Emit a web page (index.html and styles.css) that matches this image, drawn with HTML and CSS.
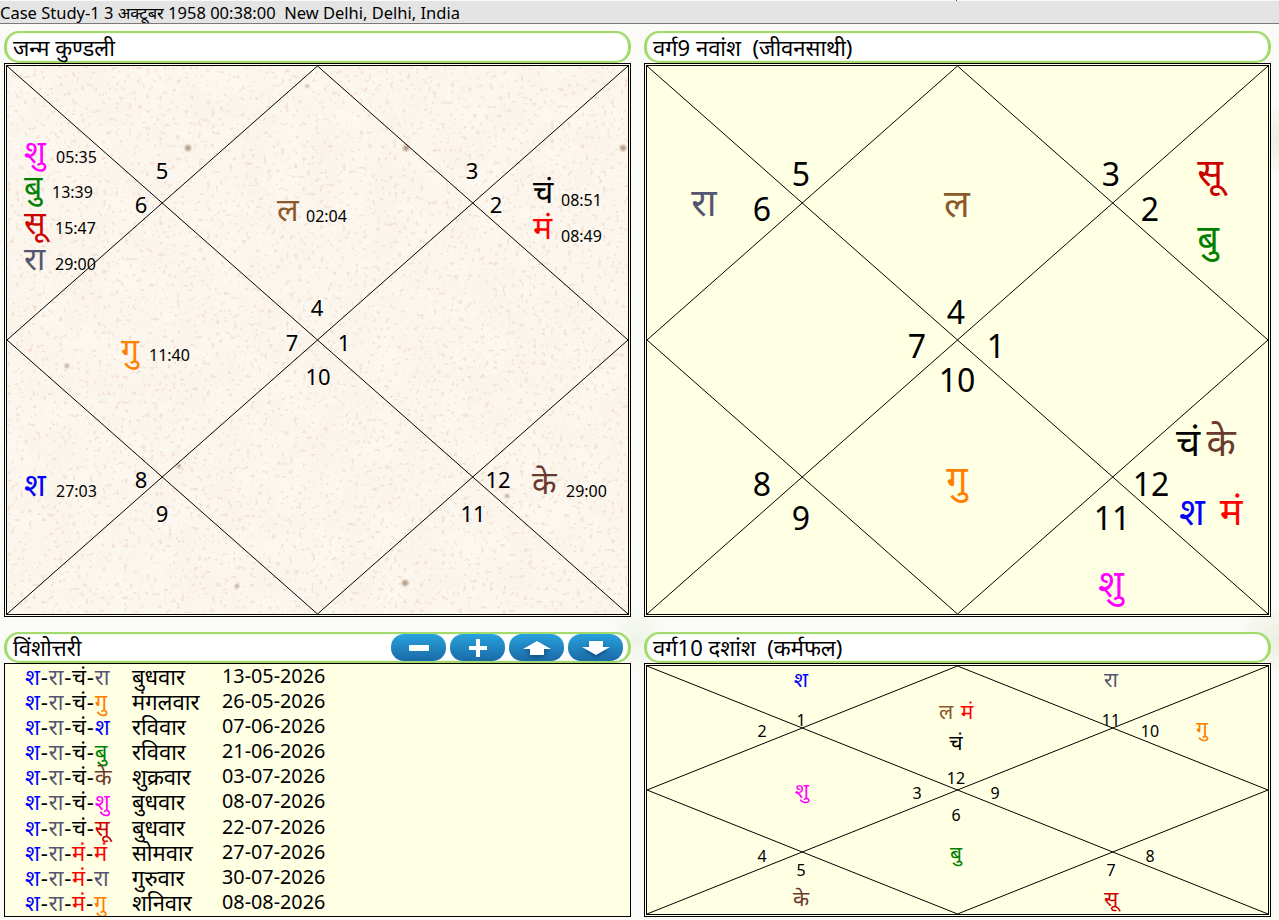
FILE: index.html
```html
<!DOCTYPE html>
<html lang="en">
<head>
    <meta charset="UTF-8">
    <title>Kundali</title>
    <link rel="stylesheet" href="styles.css">
</head>
<body>
    <div id="status-bar">Case Study-1 3 अक्टूबर 1958 00:38:00&nbsp; New Delhi, Delhi, India</div>

    <div id="layout">
        <section class="panel panel-top">
            <div class="pill"><span class="pill-title">जन्म कुण्डली</span></div>
            <div class="chart-box">
                <svg class="chart" width="621" height="548" viewBox="0 0 621 548">
                    <defs>
                        <filter id="paper" x="0" y="0" width="100%" height="100%">
                            <feTurbulence type="fractalNoise" baseFrequency="0.23" numOctaves="2" seed="11"/>
                            <feColorMatrix type="matrix" values="0 0 0 0 0.86  0 0 0 0 0.66  0 0 0 0 0.56  0 0 0 12 -7.6"/>
                        </filter>
                        <filter id="mottle" x="0" y="0" width="100%" height="100%">
                            <feTurbulence type="fractalNoise" baseFrequency="0.03" numOctaves="3" seed="4"/>
                            <feColorMatrix type="matrix" values="0 0 0 0 0.93  0 0 0 0 0.84  0 0 0 0 0.74  0 0 0 2 -0.7"/>
                        </filter>
                        <filter id="soft"><feGaussianBlur stdDeviation="0.9"/></filter>
                    </defs>
                    <rect class="paper-base" width="621" height="548"/>
                    <rect width="621" height="548" filter="url(#mottle)" opacity="0.3"/>
                    <rect width="621" height="548" filter="url(#paper)" opacity="0.55"/>
                    <g class="specks" filter="url(#soft)">
                        <circle cx="181" cy="82" r="3"/><circle cx="399" cy="82" r="3"/><circle cx="616" cy="82" r="3"/>
                        <circle cx="398" cy="517" r="3"/><circle cx="172" cy="400" r="2"/><circle cx="60" cy="300" r="2"/>
                        <circle cx="500" cy="430" r="2"/><circle cx="300" cy="20" r="1.5"/><circle cx="230" cy="520" r="2"/>
                    </g>
                    <path class="lines" d="M0 0L621 548M621 0L0 548M310.5 0L621 274L310.5 548L0 274Z"/>
                    <g class="num-md">
                        <text x="155" y="113">5</text><text x="134" y="147">6</text>
                        <text x="465" y="113">3</text><text x="489" y="147">2</text>
                        <text x="310" y="250">4</text><text x="285" y="285">7</text>
                        <text x="337" y="285">1</text><text x="311" y="319">10</text>
                        <text x="134" y="422">8</text><text x="155" y="456">9</text>
                        <text x="491" y="422">12</text><text x="466" y="456">11</text>
                    </g>
                    <g class="planet-md">
                        <text x="17" y="97" class="shu">शु</text><text x="49" y="97" class="deg">05:35</text>
                        <text x="17" y="132" class="bu">बु</text><text x="45" y="132" class="deg">13:39</text>
                        <text x="17" y="168" class="su">सू</text><text x="48" y="168" class="deg">15:47</text>
                        <text x="17" y="204" class="ra">रा</text><text x="48" y="204" class="deg">29:00</text>
                        <text x="270" y="155" class="la">ल</text><text x="299" y="156" class="deg">02:04</text>
                        <text x="526" y="137" class="ch">चं</text><text x="554" y="140" class="deg">08:51</text>
                        <text x="526" y="173" class="ma">मं</text><text x="554" y="176" class="deg">08:49</text>
                        <text x="114" y="295" class="gu">गु</text><text x="142" y="295" class="deg">11:40</text>
                        <text x="17" y="430" class="sha">श</text><text x="49" y="431" class="deg">27:03</text>
                        <text x="525" y="428" class="ke">के</text><text x="559" y="431" class="deg">29:00</text>
                    </g>
                </svg>
            </div>
        </section>

        <section class="panel panel-top">
            <div class="pill"><span class="pill-title">वर्ग9 नवांश&nbsp; (जीवनसाथी)</span></div>
            <div class="chart-box chart-cream">
                <svg class="chart" width="621" height="548" viewBox="0 0 621 548">
                    <path class="lines" d="M0 0L621 548M621 0L0 548M310.5 0L621 274L310.5 548L0 274Z"/>
                    <g class="num-lg">
                        <text x="154" y="120">5</text><text x="115" y="155">6</text>
                        <text x="464" y="120">3</text><text x="503" y="155">2</text>
                        <text x="309" y="258">4</text><text x="270" y="292">7</text>
                        <text x="349" y="292">1</text><text x="310" y="326">10</text>
                        <text x="115" y="430">8</text><text x="154" y="464">9</text>
                        <text x="504" y="430">12</text><text x="465" y="464">11</text>
                    </g>
                    <g class="planet-lg">
                        <text x="57" y="150" class="ra">रा</text>
                        <text x="310" y="151" class="la">ल</text>
                        <text x="563" y="120" class="su">सू</text>
                        <text x="561" y="186" class="bu">बु</text>
                        <text x="310" y="427" class="gu">गु</text>
                        <text x="541" y="390" class="ch">चं</text><text x="574" y="390" class="ke">के</text>
                        <text x="545" y="459" class="sha">श</text><text x="584" y="459" class="ma">मं</text>
                        <text x="464" y="531" class="shu">शु</text>
                    </g>
                </svg>
            </div>
        </section>

        <section class="panel panel-bottom">
            <div class="pill">
                <span class="pill-title">विंशोत्तरी</span>
                <div class="pill-buttons">
                    <button class="pill-btn" title="Zoom out"><svg width="20" height="8" viewBox="0 0 20 8"><rect x="0" y="1" width="20" height="6" rx="1"/></svg></button>
                    <button class="pill-btn" title="Zoom in"><svg width="18" height="18" viewBox="0 0 18 18"><path d="M7 0h4v7h7v4h-7v7H7v-7H0V7h7z"/></svg></button>
                    <button class="pill-btn pill-arrow" title="Up"><svg width="30" height="14" viewBox="0 0 30 14"><path d="M15 0L29 8H22V14H8V8H1Z"/></svg></button>
                    <button class="pill-btn pill-arrow" title="Down"><svg width="30" height="14" viewBox="0 0 30 14"><path d="M8 0H22V6H29L15 14L1 6H8Z"/></svg></button>
                </div>
            </div>
            <div class="dasha-box">
                <div class="dasha-row"><span class="dasha-lords"><b class="sha">श</b>-<b class="ra">रा</b>-<b class="ch">चं</b>-<b class="ra">रा</b></span><span class="dasha-day">बुधवार</span><span class="dasha-date">13-05-2026</span></div>
                <div class="dasha-row"><span class="dasha-lords"><b class="sha">श</b>-<b class="ra">रा</b>-<b class="ch">चं</b>-<b class="gu">गु</b></span><span class="dasha-day">मंगलवार</span><span class="dasha-date">26-05-2026</span></div>
                <div class="dasha-row"><span class="dasha-lords"><b class="sha">श</b>-<b class="ra">रा</b>-<b class="ch">चं</b>-<b class="sha">श</b></span><span class="dasha-day">रविवार</span><span class="dasha-date">07-06-2026</span></div>
                <div class="dasha-row"><span class="dasha-lords"><b class="sha">श</b>-<b class="ra">रा</b>-<b class="ch">चं</b>-<b class="bu">बु</b></span><span class="dasha-day">रविवार</span><span class="dasha-date">21-06-2026</span></div>
                <div class="dasha-row"><span class="dasha-lords"><b class="sha">श</b>-<b class="ra">रा</b>-<b class="ch">चं</b>-<b class="ke">के</b></span><span class="dasha-day">शुक्रवार</span><span class="dasha-date">03-07-2026</span></div>
                <div class="dasha-row"><span class="dasha-lords"><b class="sha">श</b>-<b class="ra">रा</b>-<b class="ch">चं</b>-<b class="shu">शु</b></span><span class="dasha-day">बुधवार</span><span class="dasha-date">08-07-2026</span></div>
                <div class="dasha-row"><span class="dasha-lords"><b class="sha">श</b>-<b class="ra">रा</b>-<b class="ch">चं</b>-<b class="su">सू</b></span><span class="dasha-day">बुधवार</span><span class="dasha-date">22-07-2026</span></div>
                <div class="dasha-row"><span class="dasha-lords"><b class="sha">श</b>-<b class="ra">रा</b>-<b class="ma">मं</b>-<b class="ma">मं</b></span><span class="dasha-day">सोमवार</span><span class="dasha-date">27-07-2026</span></div>
                <div class="dasha-row"><span class="dasha-lords"><b class="sha">श</b>-<b class="ra">रा</b>-<b class="ma">मं</b>-<b class="ra">रा</b></span><span class="dasha-day">गुरुवार</span><span class="dasha-date">30-07-2026</span></div>
                <div class="dasha-row"><span class="dasha-lords"><b class="sha">श</b>-<b class="ra">रा</b>-<b class="ma">मं</b>-<b class="gu">गु</b></span><span class="dasha-day">शनिवार</span><span class="dasha-date">08-08-2026</span></div>
            </div>
        </section>

        <section class="panel panel-bottom">
            <div class="pill"><span class="pill-title">वर्ग10 दशांश&nbsp; (कर्मफल)</span></div>
            <div class="chart-box chart-cream">
                <svg class="chart" width="621" height="248" viewBox="0 0 621 248">
                    <path class="lines" d="M0 0L621 248M621 0L0 248M310.5 0L621 124L310.5 248L0 124Z"/>
                    <g class="num-sm">
                        <text x="154" y="60">1</text><text x="115" y="71">2</text>
                        <text x="464" y="60">11</text><text x="503" y="71">10</text>
                        <text x="309" y="118">12</text><text x="270" y="133">3</text>
                        <text x="348" y="133">9</text><text x="309" y="155">6</text>
                        <text x="115" y="196">4</text><text x="154" y="210">5</text>
                        <text x="503" y="196">8</text><text x="464" y="210">7</text>
                    </g>
                    <g class="planet-sm">
                        <text x="154" y="21" class="sha">श</text>
                        <text x="464" y="21" class="ra">रा</text>
                        <text x="299" y="53" class="la">ल</text><text x="320" y="53" class="ma">मं</text>
                        <text x="309" y="84" class="ch">चं</text>
                        <text x="555" y="70" class="gu">गु</text>
                        <text x="155" y="132" class="shu">शु</text>
                        <text x="309" y="195" class="bu">बु</text>
                        <text x="154" y="240" class="ke">के</text>
                        <text x="464" y="240" class="su">सू</text>
                    </g>
                </svg>
            </div>
        </section>
    </div>
</body>
</html>
```

FILE: styles.css
```css
:root {
    --bar-bg: #e4e4e4;
    --bar-border: #7a7a7a;
    --pill-border: #a2da6e;
    --cream: #ffffe4;
    --paper: #fcf7ef;
}

* {
    box-sizing: border-box;
}

body {
    position: relative;
    margin: 0;
    width: 1279px;
    height: 920px;
    overflow: hidden;
    color: #000;
    background:
        radial-gradient(circle at 638px 640px, #eef3e6 0, rgba(238, 243, 230, 0) 30px),
        radial-gradient(circle at 1276px 140px, #eaf0e0 0, rgba(234, 240, 224, 0) 40px),
        radial-gradient(circle at 1276px 640px, #eaf0e0 0, rgba(234, 240, 224, 0) 40px),
        #fafbf6;
    font-family: "Noto Sans", "Open Sans", sans-serif;
}

/* small mark left in the top row of the window */
body::before {
    content: "";
    position: absolute;
    top: 0;
    left: 956px;
    width: 1px;
    height: 1px;
    background: #555;
}

#status-bar {
    height: 23px;
    margin-top: 1px;
    background: var(--bar-bg);
    border-bottom: 1px solid var(--bar-border);
    font-size: 16.5px;
    line-height: 24px;
    white-space: nowrap;
}

#layout {
    display: grid;
    grid-template-columns: 627px 627px;
    column-gap: 13px;
    padding: 7px 0 0 4px;
}

.panel-top {
    height: 601px;
}

.pill {
    display: flex;
    align-items: center;
    justify-content: space-between;
    height: 32px;
    padding: 0 5px 0 6px;
    background: #fff;
    border: solid var(--pill-border);
    border-width: 2px 3px;
    border-radius: 15px;
    box-shadow: inset 0 0 2px #cdeeae;
}

.panel-bottom .pill {
    height: 31px;
}

.pill-title {
    font-size: 22px;
    line-height: 27px;
}

.pill-buttons {
    display: flex;
    gap: 4px;
}

.pill-btn {
    display: flex;
    align-items: center;
    justify-content: center;
    width: 55px;
    height: 27px;
    padding: 0;
    border: none;
    border-radius: 13px;
    background: linear-gradient(#28a2de, #1a6aa6);
}

.pill-btn svg {
    fill: #fff;
}

.pill-arrow svg {
    filter: drop-shadow(0 2px 2px rgba(0, 40, 80, 0.55));
}

.chart-box {
    padding: 1px;
    border: 1px solid #000;
    background: var(--cream);
}

.chart {
    display: block;
    box-sizing: content-box;
    border: 1px solid #000;
}

.paper-base {
    fill: var(--paper);
}

.specks circle {
    fill: #b59a86;
}

.lines {
    fill: none;
    stroke: #000;
    stroke-width: 1;
}

.num-md text,
.num-lg text,
.num-sm text,
.planet-lg text,
.planet-sm text {
    text-anchor: middle;
}

.num-md text {
    font-size: 22px;
}

.num-lg text {
    font-size: 32px;
}

.num-sm text {
    font-size: 16px;
}

.planet-md text {
    font-size: 32px;
}

.planet-md .deg {
    font-size: 16px;
}

.planet-lg text {
    font-size: 38px;
}

.planet-sm text {
    font-size: 21px;
}

.sha { color: #0000ff; fill: #0000ff; }
.ra { color: #555570; fill: #555570; }
.ch { color: #000; fill: #000; }
.gu { color: #ff8000; fill: #ff8000; }
.bu { color: #008000; fill: #008000; }
.ke { color: #6b3a2e; fill: #6b3a2e; }
.shu { color: #ff00ff; fill: #ff00ff; }
.su { color: #cc0000; fill: #cc0000; }
.la { color: #8b5a2b; fill: #8b5a2b; }
.ma { color: #ff0000; fill: #ff0000; }

.dasha-box {
    height: 254px;
    padding-left: 20px;
    overflow: hidden;
    background: var(--cream);
    border: 1px solid #000;
}

.dasha-row {
    display: flex;
    height: 25.1px;
    font-size: 22px;
    line-height: 24px;
    white-space: nowrap;
}

.dasha-lords {
    width: 107px;
    letter-spacing: 0.8px;
}

.dasha-lords b {
    font-weight: normal;
}

.dasha-day {
    width: 90px;
}

.dasha-date {
    font-size: 19.8px;
}
```
